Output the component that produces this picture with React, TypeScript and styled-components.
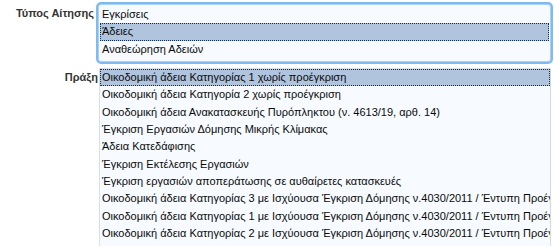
import styled, { createGlobalStyle } from 'styled-components';

const GlobalStyle = createGlobalStyle`
  html, body {
    margin: 0;
    padding: 0;
    background: #ffffff;
    font-family: "Liberation Sans", Arial, sans-serif;
  }
`;

const typeOptions = ['Εγκρίσεις', 'Άδειες', 'Αναθεώρηση Αδειών'];

const actOptions = [
  'Οικοδομική άδεια Κατηγορίας 1 χωρίς προέγκριση',
  'Οικοδομική άδεια Κατηγορία 2 χωρίς προέγκριση',
  'Οικοδομική άδεια Ανακατασκευής Πυρόπληκτου (ν. 4613/19, αρθ. 14)',
  'Έγκριση Εργασιών Δόμησης Μικρής Κλίμακας',
  'Άδεια Κατεδάφισης',
  'Έγκριση Εκτέλεσης Εργασιών',
  'Έγκριση εργασιών αποπεράτωσης σε αυθαίρετες κατασκευές',
  'Οικοδομική άδεια Κατηγορίας 3 με Ισχύουσα Έγκριση Δόμησης ν.4030/2011 / Έντυπη Προέγκριση',
  'Οικοδομική άδεια Κατηγορίας 1 με Ισχύουσα Έγκριση Δόμησης ν.4030/2011 / Έντυπη Προέγκριση',
  'Οικοδομική άδεια Κατηγορίας 2 με Ισχύουσα Έγκριση Δόμησης ν.4030/2011 / Έντυπη Προέγκριση',
];

const App = () => {
  return (
    <>
      <GlobalStyle />
      <StyledForm>
        <StyledRow $top={4}>
          <StyledLabel $shift={4} $offset={1}>
            Τύπος Αίτησης
          </StyledLabel>
          <StyledList $focused role="listbox">
            {typeOptions.map((opt) => (
              <StyledOption key={opt} $selected={opt === 'Άδειες'}>
                {opt}
              </StyledOption>
            ))}
          </StyledList>
        </StyledRow>
        <StyledRow $top={6}>
          <StyledLabel $shift={0} $offset={1}>
            Πράξη
          </StyledLabel>
          <StyledList role="listbox">
            {actOptions.map((opt, i) => (
              <StyledOption key={opt} $selected={i === 0}>
                {opt}
              </StyledOption>
            ))}
          </StyledList>
        </StyledRow>
      </StyledForm>
    </>
  );
};

export default App;

const StyledForm = styled.form`
  width: 554px;
  display: flex;
  flex-direction: column;
`;

const StyledRow = styled.div<{ $top: number }>`
  margin-top: ${(p) => p.$top}px;
  display: grid;
  grid-template-columns: 98px 453px;
  align-items: start;
`;

const StyledLabel = styled.label<{ $shift: number; $offset: number }>`
  padding-right: ${(p) => p.$shift}px;
  padding-top: ${(p) => p.$offset}px;
  text-align: right;
  font-size: 11px;
  font-weight: bold;
  line-height: 17px;
  color: #333333;
  white-space: nowrap;
`;

const StyledList = styled.div<{ $focused?: boolean }>`
  background: #f7fbff;
  overflow: hidden;
  ${(p) =>
    p.$focused
      ? `
    border: 1px solid #a9d0f5;
    border-radius: 3px;
    box-shadow: 0 0 0 2px #7fbbf3;
    padding: 1px 1px 3px 1px;
  `
      : `
    margin-left: 1px;
    border: 1px solid #d6e0ea;
    border-right-color: #cfdbe6;
    padding: 0 0 8px 0;
  `}
`;

const StyledOption = styled.div<{ $selected?: boolean }>`
  height: 17.35px;
  line-height: 17px;
  padding-left: 2px;
  font-size: 11px;
  color: #0a0a0a;
  white-space: nowrap;
  overflow: hidden;
  box-sizing: border-box;
  background: ${(p) => (p.$selected ? '#b0c4de' : 'transparent')};
  outline: ${(p) => (p.$selected ? '1px dotted #0d2a66' : 'none')};
  outline-offset: -1px;
`;
